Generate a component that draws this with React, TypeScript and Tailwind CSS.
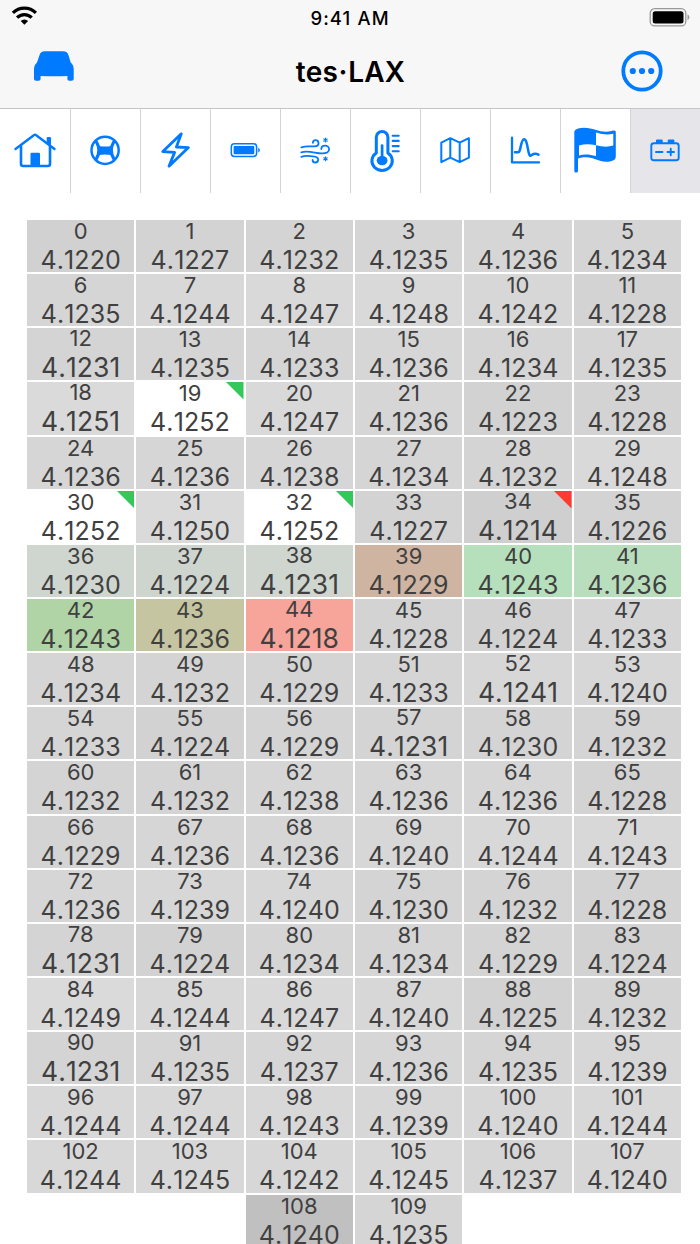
import type { ReactNode } from 'react';
import clsx from 'clsx';

// Readings in units of 0.0001 V above 4.1 V, in cell order.
const READINGS = [
  220, 227, 232, 235, 236, 234,
  235, 244, 247, 248, 242, 228,
  231, 235, 233, 236, 234, 235,
  251, 252, 247, 236, 223, 228,
  236, 236, 238, 234, 232, 248,
  252, 250, 252, 227, 214, 226,
  230, 224, 231, 229, 243, 236,
  243, 236, 218, 228, 224, 233,
  234, 232, 229, 233, 241, 240,
  233, 224, 229, 231, 230, 232,
  232, 232, 238, 236, 236, 228,
  229, 236, 236, 240, 244, 243,
  236, 239, 240, 230, 232, 228,
  231, 224, 234, 234, 229, 224,
  249, 244, 247, 240, 225, 232,
  231, 235, 237, 236, 235, 239,
  244, 244, 243, 239, 240, 244,
  244, 245, 242, 245, 237, 240,
  240, 235
];

const MAX = Math.max(...READINGS);
const MIN = Math.min(...READINGS);

const TINTS: Record<number, string> = {
  36: '#ced6cf',
  37: '#cdd5ce',
  38: '#ced6cf',
  39: '#cfb5a1',
  40: '#b6e0bc',
  41: '#b9debe',
  42: '#b1d4a7',
  43: '#c5c6a1',
  44: '#f7a59b',
  108: '#c0c0c0'
};

function cellColor(index: number, reading: number) {
  if (TINTS[index]) return TINTS[index];
  if (reading === MAX) return '#ffffff';
  const level = Math.round(207 + (reading - MIN) * 0.3);
  return `rgb(${level}, ${level}, ${level})`;
}

function Cell({ index }: { index: number }) {
  const reading = READINGS[index];
  const value = `4.1${reading}`;
  // narrow values are scaled up to fill the cell
  const wide = !value.slice(3).includes('1');
  return (
    <div
      className={clsx('relative h-[52.15px] text-center text-[#404040]', index === 108 && 'col-start-3')}
      style={{ backgroundColor: cellColor(index, reading) }}
    >
      <div className={clsx('text-[22px] leading-[22px]', wide ? 'pt-0' : '-mt-px')}>{index}</div>
      <div
        className={clsx(
          'whitespace-nowrap [font-kerning:none]',
          wide
            ? 'mt-[6px] text-[25px] leading-[25px] tracking-[0.1px]'
            : 'mt-[5px] text-[26.5px] leading-[26px] tracking-[0.1px]'
        )}
      >
        {value}
      </div>
      {reading === MAX || reading === MIN ? (
        <svg className="absolute top-0 right-0 h-[17.5px] w-[17.5px]" viewBox="0 0 17 17">
          <path d="M0 0h17v17z" fill={reading === MAX ? '#34c759' : '#ff3b30'} />
        </svg>
      ) : null}
    </div>
  );
}

const TABS: { name: string; icon: ReactNode }[] = [
  {
    name: 'Home',
    icon: (
      <>
        <path d="M15.5 40 33.8 26.2Q35 25.2 36.2 26.2L54.5 40" strokeWidth="2.4" />
        <path d="M21 37v18q0 2 2.2 2h24.6q2.2 0 2.2-2V37" strokeWidth="2.6" />
        <path d="M30.5 57V45q0-1.2 1.2-1.2h7.1q1.2 0 1.2 1.2v12z" fill="currentColor" stroke="none" />
        <path d="M46.7 33.5v-4.3q0-1.2 1.2-1.2h1.9q1.2 0 1.2 1.2v8z" fill="currentColor" stroke="none" />
      </>
    )
  },
  {
    name: 'Drive',
    icon: (
      <>
        <circle cx="35.1" cy="41.3" r="13.6" strokeWidth="2.5" />
        <path d="M29 37.8q6 1.4 12.2 0v7.4q-6.2-1.4-12.2 0z" fill="currentColor" strokeWidth="1.8" />
        <path d="M26.6 33.2Q31.3 41.3 26.6 49.4M43.6 33.2Q38.9 41.3 43.6 49.4" strokeWidth="3.2" />
      </>
    )
  },
  {
    name: 'Charging',
    icon: <path d="M41.3 24.8 22.8 42.6 34.6 43.4 29 57.2 48.4 38.6 36.4 38z" strokeWidth="2.8" />
  },
  {
    name: 'Battery',
    icon: (
      <>
        <rect x="21.3" y="34.8" width="25.3" height="12.6" rx="3.2" strokeWidth="1.5" />
        <rect x="23.6" y="37" width="20.7" height="8.2" rx="1" fill="currentColor" stroke="none" />
        <path d="M48.2 38.7q1.7.6 1.7 2.4t-1.7 2.4z" fill="currentColor" stroke="none" />
      </>
    )
  },
  {
    name: 'Climate',
    icon: (
      <>
        <path
          d="M21.3 38.3c6-1.8 9-.6 13.2-.9 2.6-.2 4.1-1.4 4-3.2 0-1.8-1.4-3-3-3-1.5 0-2.6 1-2.6 2.6M21.3 43.4c7-2.2 14 .9 20.5 1 4 .1 7.2-1 7.3-4.1 0-2.2-1.8-3.7-4-3.7-2.3 0-3.8 1.4-3.8 3.4M21.3 47.8c5-1.8 8-.7 11.5-.4 3.4.3 5.4 1 5.4 3.1 0 1.8-1.3 3-3 3-1.5 0-2.6-1-2.6-2.6"
          strokeWidth="1.8"
        />
        <path
          d="M45.5 29.2v3.8M43.8 30.1l3.4 2M47.2 30.1l-3.4 2M45.5 47.9v3.8M43.8 48.8l3.4 2M47.2 48.8l-3.4 2"
          strokeWidth="1.2"
        />
      </>
    )
  },
  {
    name: 'Temperature',
    icon: (
      <>
        <path d="M26.3 44V28.2a5.8 5.8 0 0 1 11.6 0V44a10.2 9.6 0 1 1-11.6 0z" strokeWidth="3" />
        <path d="M32.1 36.5V50" strokeWidth="2.7" />
        <ellipse cx="32.1" cy="51.6" rx="5.4" ry="4.7" fill="currentColor" stroke="none" />
        <path d="M42.7 26.8h6M42.7 31.9h6M42.7 37.1h6M42.7 42.2h6" strokeWidth="2.1" />
      </>
    )
  },
  {
    name: 'Map',
    icon: (
      <path
        d="M21.3 33.6 30.3 29.2 39.7 33.6 48.9 29.2V48.7L39.7 53.1 30.3 48.7 21.3 53.1zM30.3 29.2V48.7M39.7 33.6V53.1"
        strokeWidth="2"
      />
    )
  },
  {
    name: 'Graph',
    icon: (
      <>
        <path d="M22 28.7V53.4H49" strokeWidth="2.3" />
        <path
          d="M25 43.3h3c1 0 1.4-.7 1.7-1.7 1.4-4.6 2-11.3 4.3-11.3 3.6 0 3.4 12 5.6 15.9.5 1 1.3.3 2.1-.2 2.3-1.6 4.3-1.6 6.8-.4"
          strokeWidth="2.5"
        />
      </>
    )
  },
  {
    name: 'Race',
    icon: (
      <>
        <path
          d="M14.3 22.3C16 19.5 19.5 18.7 24 18.7c9 0 14 4 22.5 4 3 0 5-.7 7-1.1 1.6-.3 2.3.4 2.3 1.8v24.1c0 4-4.5 5.2-9.3 5.2-8.5 0-12-4.4-20.5-4.4-3 0-5.5.5-8 1.3v12.1c0 1.2-.8 1.9-1.9 1.9s-1.8-.7-1.8-1.9z"
          fill="currentColor"
          stroke="none"
        />
        <path
          d="M36 23.6c6 1.8 11.5 2.8 17.3 1.2v11.8c-5.8 1.8-11.3 1.2-17.3-.3zM19 36.5c5.5-1.9 11.3-1.6 17-.2v10.800c-5.700-1.500-11.500-2.400-17-.6z"
          fill="white"
          stroke="none"
        />
      </>
    )
  },
  {
    name: 'Cells',
    icon: (
      <>
        <rect x="21.3" y="34.2" width="27.4" height="17" rx="2.5" strokeWidth="1.9" />
        <path
          d="M26 34v-2.4q0-1.2 1.2-1.2h4.3q1.2 0 1.2 1.2V34zM37.7 34v-2.4q0-1.2 1.2-1.2h4.3q1.2 0 1.2 1.2V34z"
          fill="currentColor"
          stroke="none"
        />
        <path d="M26 43h6.5M37.5 43h6.5M40.75 39.7v6.6" strokeWidth="1.9" />
      </>
    )
  }
];

function StatusBar() {
  return (
    <div className="grid h-9 grid-cols-3 items-center px-[10px] text-black">
      <svg className="mb-1 h-5 w-7" viewBox="0 0 28 20" fill="none" stroke="black" strokeWidth="3.2">
        <path d="M2.9 6.9a16.2 16.2 0 0 1 23 0M7.1 11.6a10.3 10.3 0 0 1 14.6 0" />
        <path d="M10.7 15a5.3 5.3 0 0 1 7.4 0l-3.7 3.7z" fill="black" stroke="none" />
      </svg>
      <div className="text-center text-[18.5px] leading-9 font-medium tracking-[1.1px]">9:41 AM</div>
      <svg className="mb-[3px] h-5 w-[42px] justify-self-end" viewBox="0 0 42 20" fill="none">
        <rect x="2.2" y="1.7" width="35.6" height="17.2" rx="4.5" stroke="#999" strokeWidth="1.3" />
        <rect x="4.7" y="4.2" width="30.8" height="12.3" rx="2.5" fill="black" />
        <path d="M39.5 7.3q1.8 1 1.8 3t-1.8 3z" fill="#999" />
      </svg>
    </div>
  );
}

export default function App() {
  return (
    <div className="h-[1244px] w-[700px] overflow-hidden bg-white font-['Inter','Liberation_Sans',sans-serif]">
      <header className="h-[109px] border-b border-[#c6c6c8] bg-[#f7f7f7]">
        <StatusBar />
        <div className="flex h-[71px] items-center justify-between pr-[37px] pl-[33px]">
          <svg className="mb-3 h-8 w-[42px] text-[#007aff]" viewBox="0 0 42 32" fill="currentColor">
            <path d="M12 1.2h18c3.2 0 4.7 1.4 5.6 4.2l2.1 7c2.2 1.8 3 4 3 7v9.3c0 1.3-.8 2-2 2h-2.3c-1.3 0-2-.7-2-2v-2.8c-8.9.5-17.9.5-26.8 0v2.8c0 1.3-.8 2-2 2H3c-1.3 0-2-.7-2-2v-9.3c0-3 .9-5.2 3-7l2.4-7c.9-2.8 2.4-4.2 5.6-4.2z" />
          </svg>
          <h1 className="pl-[5px] text-[28px] leading-9 font-semibold tracking-[0.2px]">
            tes<span className="mx-[0.5px]">·</span>LAX
          </h1>
          <svg className="mb-px h-[42px] w-[42px] text-[#007aff]" viewBox="0 0 42 42" fill="currentColor">
            <circle cx="21" cy="21" r="18.7" fill="none" stroke="currentColor" strokeWidth="3.8" />
            <circle cx="11.8" cy="21" r="3.1" />
            <circle cx="21" cy="21" r="3.1" />
            <circle cx="30.2" cy="21" r="3.1" />
          </svg>
        </div>
      </header>

      <nav className="grid h-[83px] grid-cols-10">
        {TABS.map((tab, i) => (
          <button
            key={tab.name}
            aria-label={tab.name}
            className={clsx(
              'h-[83.5px] text-[#007aff]',
              i > 0 && 'border-l border-[#d4d4d6]',
              i === TABS.length - 1 && 'bg-[#e5e5ea]'
            )}
          >
            <svg
              className={clsx('h-[83px] w-[70px]', i > 0 && '-ml-px')}
              viewBox="0 0 70 83"
              fill="none"
              stroke="currentColor"
              strokeLinecap="round"
              strokeLinejoin="round"
            >
              {tab.icon}
            </svg>
          </button>
        ))}
      </nav>

      <main className="mt-7 ml-[27px] grid w-[654px] grid-cols-6 gap-[2px]">
        {READINGS.map((_, i) => (
          <Cell key={i} index={i} />
        ))}
      </main>
    </div>
  );
}
